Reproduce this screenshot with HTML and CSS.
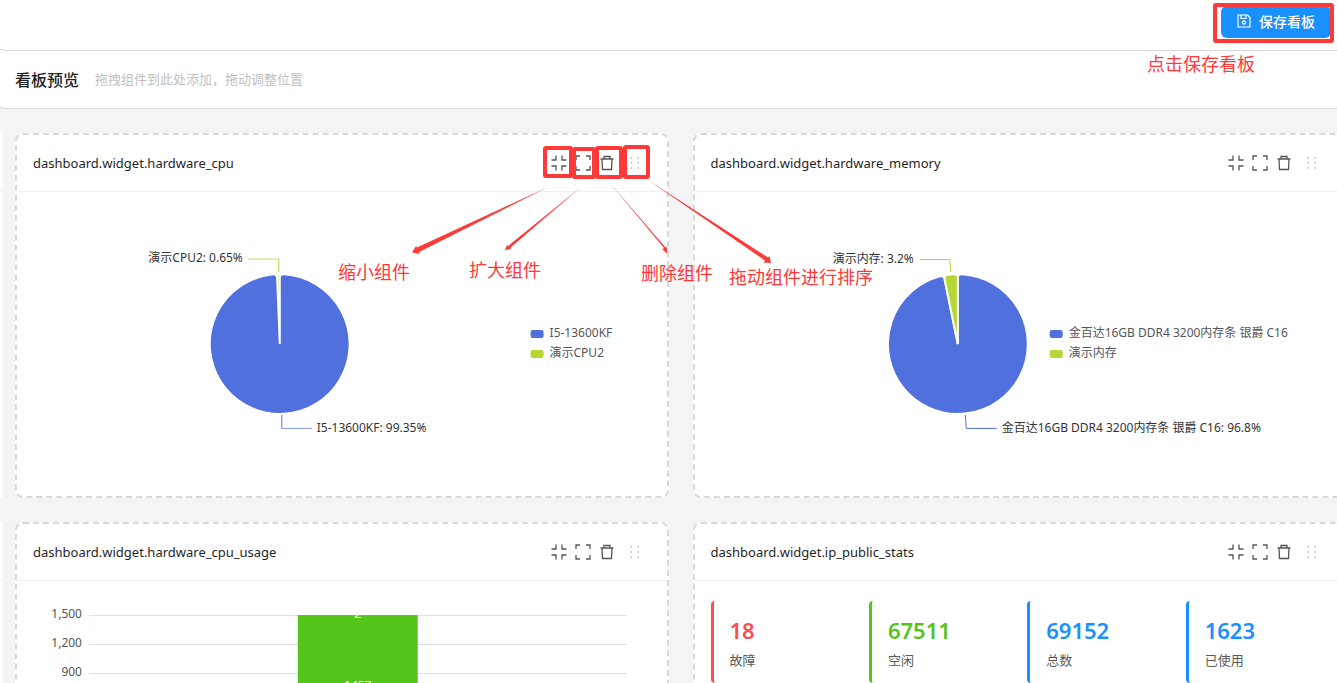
FILE: index.html
```html
<!DOCTYPE html>
<html lang="zh-CN">
<head>
    <meta charset="utf-8">
    <title>看板预览</title>
    <link rel="stylesheet" href="styles.css">
</head>
<body>
    <svg class="defs" aria-hidden="true">
        <symbol id="i-shrink" viewBox="0 0 16 16">
            <path d="M5 .5V5H.5M11 .5V5h4.500M5 15.500V11H.5M11 15.500V11h4.500"/>
        </symbol>
        <symbol id="i-expand" viewBox="0 0 16 16">
            <path d="M1 5V1h4M11 1h4v4M1 11v4h4M11 15h4v-4"/>
        </symbol>
        <symbol id="i-delete" viewBox="0 0 16 16">
            <path d="M1.500 4h13M5 4V1.500h6V4M3 4l.5 10.500h9L13 4"/>
        </symbol>
        <symbol id="i-drag" viewBox="0 0 16 16">
            <path d="M3.500 3h1.500M10.500 3h1.500M3.500 8h1.500M10.500 8h1.500M3.500 13h1.500M10.500 13h1.500" stroke-width="1.5"/>
        </symbol>
    </svg>
    <div class="page">
        <div class="edge">
            <div class="edge-top"></div>
            <div class="edge-title"></div>
            <div class="edge-card"></div>
            <div class="edge-card"></div>
        </div>
        <main class="board">
            <header class="toolbar">
                <button type="button" class="save">
                    <svg viewBox="0 0 14 14"><path d="M1 1h9.500L13 3.500V13H1zM4 1v3.500h5V1"/><circle cx="7" cy="8.500" r="1.600"/></svg>
                    <span>保存看板</span>
                </button>
            </header>
            <div class="preview-head">
                <h1>看板预览</h1>
                <span>拖拽组件到此处添加，拖动调整位置</span>
            </div>
            <div class="widgets">
                <section class="card">
                    <div class="card-head">
                        <h2>dashboard.widget.hardware_cpu</h2>
                        <div class="tools">
                            <button type="button" aria-label="缩小"><svg><use href="#i-shrink"/></svg></button>
                            <button type="button" aria-label="扩大"><svg><use href="#i-expand"/></svg></button>
                            <button type="button" aria-label="删除"><svg><use href="#i-delete"/></svg></button>
                            <button type="button" aria-label="拖动" class="drag"><svg><use href="#i-drag"/></svg></button>
                        </div>
                    </div>
                    <div class="card-body">
                        <svg class="chart" viewBox="0 0 618 304">
                            <path class="slice blue" d="M247 152V86Q247 82 251 82.1A70 70 0 1 1 240.2 82.3Q244.1 82.1 244.3 86Z"/>
                            <path d="M245.700 83L246 99" stroke="#e0eea8"/>
                            <path class="guide" d="M215 67H246" stroke="#c6dc5c"/>
                            <path class="guide" d="M246 67V80" stroke="#b7d332"/>
                            <path class="guide" d="M249 223V236.500" stroke="#5070dd"/>
                            <path class="guide" d="M249 236.500H279" stroke="#7f9ae8"/>
                            <text class="label" x="210" y="70" text-anchor="end">演示CPU2: 0.65%</text>
                            <text class="label" x="284" y="240">I5-13600KF: 99.35%</text>
                            <rect class="blue" x="498" y="138" width="13" height="8" rx="2"/>
                            <rect class="green" x="498" y="158" width="13" height="8" rx="2"/>
                            <text class="legend" x="517" y="145">I5-13600KF</text>
                            <text class="legend" x="517" y="165">演示CPU2</text>
                        </svg>
                    </div>
                </section>
                <section class="card">
                    <div class="card-head">
                        <h2>dashboard.widget.hardware_memory</h2>
                        <div class="tools">
                            <button type="button" aria-label="缩小"><svg><use href="#i-shrink"/></svg></button>
                            <button type="button" aria-label="扩大"><svg><use href="#i-expand"/></svg></button>
                            <button type="button" aria-label="删除"><svg><use href="#i-delete"/></svg></button>
                            <button type="button" aria-label="拖动" class="drag"><svg><use href="#i-drag"/></svg></button>
                        </div>
                    </div>
                    <div class="card-body">
                        <svg class="chart" viewBox="0 0 618 304">
                            <path class="slice blue" d="M247 152V86Q247 82 251 82.1A70 70 0 1 1 229.2 84.3Q233 83.4 233.8 87.3Z"/>
                            <path class="slice green" d="M247 152L233.8 87.3Q233 83.4 237 82.7A70 70 0 0 1 243 82.1Q247 82 247 86Z"/>
                            <path class="guide" d="M209 67.500H239L240 80" stroke="#b7d332"/>
                            <path class="guide" d="M254.500 223L255.500 236.500H286" stroke="#5070dd"/>
                            <text class="label" x="203" y="71" text-anchor="end">演示内存: 3.2%</text>
                            <text class="label" x="291" y="240">金百达16GB DDR4 3200内存条 银爵 C16: 96.8%</text>
                            <rect class="blue" x="339" y="138" width="13" height="8" rx="2"/>
                            <rect class="green" x="339" y="158" width="13" height="8" rx="2"/>
                            <text class="legend" x="358" y="145">金百达16GB DDR4 3200内存条 银爵 C16</text>
                            <text class="legend" x="358" y="165">演示内存</text>
                        </svg>
                    </div>
                </section>
                <section class="card">
                    <div class="card-head">
                        <h2>dashboard.widget.hardware_cpu_usage</h2>
                        <div class="tools">
                            <button type="button" aria-label="缩小"><svg><use href="#i-shrink"/></svg></button>
                            <button type="button" aria-label="扩大"><svg><use href="#i-expand"/></svg></button>
                            <button type="button" aria-label="删除"><svg><use href="#i-delete"/></svg></button>
                            <button type="button" aria-label="拖动" class="drag"><svg><use href="#i-drag"/></svg></button>
                        </div>
                    </div>
                    <div class="card-body">
                        <svg class="chart" viewBox="0 0 618 304">
                            <path class="grid" d="M56 34.500H594M56 63.500H594M56 92.500H594"/>
                            <rect x="265" y="34" width="120" height="236" fill="#52c41a"/>
                            <text class="axis" x="49" y="37">1,500</text>
                            <text class="axis" x="49" y="66">1,200</text>
                            <text class="axis" x="49" y="95">900</text>
                            <text class="value" x="325" y="37">2</text>
                            <text class="value" x="325" y="109">1457</text>
                        </svg>
                    </div>
                </section>
                <section class="card">
                    <div class="card-head">
                        <h2>dashboard.widget.ip_public_stats</h2>
                        <div class="tools">
                            <button type="button" aria-label="缩小"><svg><use href="#i-shrink"/></svg></button>
                            <button type="button" aria-label="扩大"><svg><use href="#i-expand"/></svg></button>
                            <button type="button" aria-label="删除"><svg><use href="#i-delete"/></svg></button>
                            <button type="button" aria-label="拖动" class="drag"><svg><use href="#i-drag"/></svg></button>
                        </div>
                    </div>
                    <div class="card-body stats">
                        <div class="stat red"><strong>18</strong><span>故障</span></div>
                        <div class="stat lime"><strong>67511</strong><span>空闲</span></div>
                        <div class="stat"><strong>69152</strong><span>总数</span></div>
                        <div class="stat"><strong>1623</strong><span>已使用</span></div>
                    </div>
                </section>
            </div>
        </main>
        <!-- 操作说明标注 -->
        <svg class="notes" width="900" height="300">
            <g fill="none" stroke="#ff3838" stroke-width="4">
                <rect x="545" y="148" width="26" height="28" rx="1"/>
                <rect x="574" y="149" width="20" height="28" rx="1"/>
                <rect x="597" y="148" width="24" height="29" rx="1"/>
                <rect x="625" y="147" width="23" height="30" rx="1"/>
            </g>
            <g fill="#ff3838">
                <path d="M548 187L417 247.500L416 246L412 252.500L420 254L419 252Z"/>
                <path d="M581 187L508 246L507 245L505 250L511 249L510 248Z"/>
                <path d="M609 182L664 248L662.500 249.500L667 253.500L667 247L665.500 247.500Z"/>
                <path d="M648 180L768 257.500L769.500 256L771 263L763.500 262.500L765 260.500Z"/>
            </g>
            <text x="338" y="279">缩小组件</text>
            <text x="469" y="277">扩大组件</text>
            <text x="641" y="280">删除组件</text>
            <text x="729" y="284">拖动组件进行排序</text>
        </svg>
        <div class="save-frame"></div>
        <div class="save-note">点击保存看板</div>
    </div>
</body>
</html>
```
FILE: styles.css
```css
* {
    box-sizing: border-box;
}
body {
    margin: 0;
    height: 100vh;
    overflow: hidden;
    background-color: #f4f4f4;
    color: #1f1f1f;
    font-family: "Noto Sans", "Noto Sans CJK SC", sans-serif;
    font-size: 13px;
}
h1, h2 {
    margin: 0;
}
button {
    font-family: inherit;
    border: 0;
    padding: 0;
    cursor: pointer;
}
.defs {
    display: none;
}
.page {
    position: relative;
    display: flex;
    overflow: hidden;
    height: 100%;
}
.edge {
    width: 3px;
}
.edge-top {
    height: 50px;
    background-color: #fff;
    border-bottom: 1px solid #d9d9d9;
}
.edge-title {
    height: 58px;
    margin-bottom: 24px;
    background-color: #fff;
    border-bottom: 1px solid #d9d9d9;
}
.edge-card {
    height: 365px;
    margin-bottom: 24px;
    background: linear-gradient(#f0f0f0, #f0f0f0) 0 58px / 100% 1px no-repeat #fff;
}
.board {
    flex: 1;
    min-width: 0;
}
.toolbar {
    display: flex;
    justify-content: flex-end;
    height: 51px;
    padding: 6px 6px 0 0;
    background-color: #fff;
    border-bottom: 1px solid #d9d9d9;
}
.save {
    display: flex;
    align-items: center;
    gap: 8px;
    height: 32px;
    padding: 0 16px 2px;
    border-radius: 6px;
    background-color: #1890ff;
    color: #fff;
    font-size: 14px;
    font-weight: 500;
}
.save svg {
    width: 14px;
    height: 14px;
    fill: none;
    stroke: currentColor;
    stroke-width: 1.2;
}
.preview-head {
    display: flex;
    align-items: center;
    gap: 16px;
    height: 58px;
    padding: 0 0 2px 12px;
    background-color: #fff;
    border-bottom: 1px solid #d9d9d9;
}
.preview-head h1 {
    font-size: 16px;
    font-weight: 500;
}
.preview-head span {
    color: #bfbfbf;
}
.widgets {
    display: grid;
    grid-template-columns: 1fr 1fr;
    gap: 24px;
    margin-right: -9px;
    padding: 24px 0 24px 12px;
}
.card {
    background-color: #fff;
    border: 2px dashed #d9d9d9;
    border-radius: 8px;
}
.card-head {
    display: flex;
    align-items: center;
    justify-content: space-between;
    height: 57px;
    padding: 0 24px 0 16px;
    border-bottom: 1px solid #f0f0f0;
}
.card-head h2 {
    font-size: 13px;
    font-weight: 400;
}
.tools {
    display: flex;
    gap: 8px;
}
.tools button {
    width: 16px;
    height: 16px;
    background: none;
    color: #555;
}
.tools .drag {
    margin-left: 4px;
    color: #bbb;
}
.tools svg {
    display: block;
    width: 16px;
    height: 16px;
    fill: none;
    stroke: currentColor;
    stroke-width: 1.3;
}
.card-body {
    padding: 0 16px;
}
.chart {
    display: block;
    width: 100%;
    height: 304px;
    font-size: 12px;
}
.blue {
    fill: #5070dd;
}
.green {
    fill: #b6d634;
}
.slice {
    stroke: #fff;
    stroke-width: 2;
}
.guide {
    fill: none;
}
.label {
    fill: #333;
}
.legend, .axis {
    fill: #54555a;
}
.axis {
    text-anchor: end;
}
.value {
    fill: #fff;
    text-anchor: middle;
}
.grid {
    stroke: #dbdde0;
}
.stats {
    display: grid;
    grid-template-columns: repeat(4, 1fr);
    align-content: start;
    gap: 16px;
    padding-top: 20px;
}
.stat {
    height: 82px;
    padding: 11px 16px;
    border-left: 3px solid #1890ff;
    border-radius: 4px;
    color: #1890ff;
}
.stat.red {
    border-color: #ff4d4f;
    color: #ff4d4f;
}
.stat.lime {
    border-color: #52c41a;
    color: #52c41a;
}
.stat strong, .stat span {
    display: block;
}
.stat strong {
    font-size: 22px;
    font-weight: 600;
    line-height: 36px;
}
.stat span {
    color: #595959;
    line-height: 24px;
}
.notes {
    position: absolute;
    top: 0;
    left: 0;
    pointer-events: none;
}
.notes text, .save-note {
    fill: #ff3838;
    color: #ff3838;
    font-size: 18px;
    font-weight: 400;
}
.save-frame {
    position: absolute;
    top: 3px;
    right: 3px;
    width: 121px;
    height: 40px;
    border: 4px solid #ff3838;
    border-radius: 3px;
    pointer-events: none;
}
.save-note {
    position: absolute;
    top: 52px;
    right: 82px;
    line-height: 24px;
}
```
